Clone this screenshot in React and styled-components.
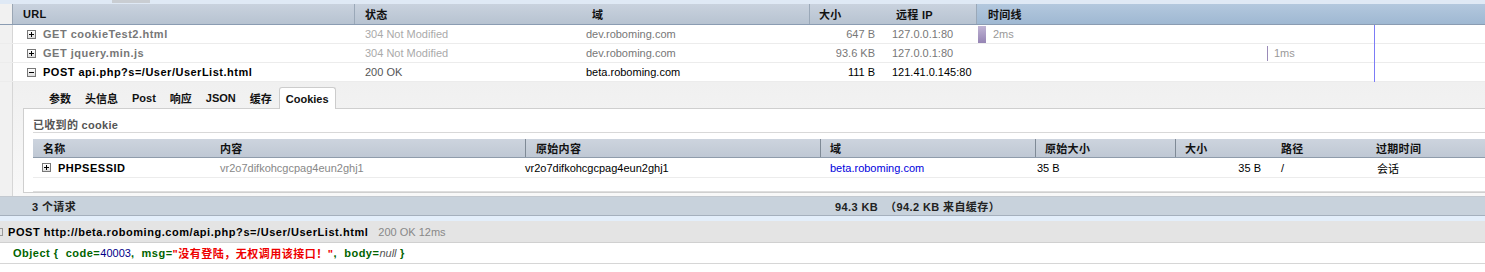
import React from 'react';
import styled, { createGlobalStyle } from 'styled-components';

const GlobalStyle = createGlobalStyle`
  html, body { margin: 0; padding: 0; background: #fff; }
  body {
    font-family: Tahoma, "Liberation Sans", "Noto Sans CJK SC", sans-serif;
    font-size: 11px;
    color: #000;
    overflow: hidden;
  }
`;

const Page = styled.div`
  width: 1485px;
  height: 272px;
  overflow: hidden;
  background: #fff;
`;

const TopStrip = styled.div`
  height: 4px;
  background: #dfe9f5;
  display: flex;
`;

const TopTab = styled.div`
  width: 38px;
  margin-left: 112px;
  height: 3px;
  background: #c9cdd2;
`;

const Header = styled.div`
  display: flex;
  height: 20px;
  border-bottom: 1px solid #8a9cb2;
  background: linear-gradient(#c9d2de, #b7c3d1);
`;

const Gutter = styled.div`
  width: 13px;
  flex: none;
  background: #f1f1f1;
  border-right: 1px solid ${p => (p.$dark ? '#9aa6b4' : '#d6d6d6')};
  box-sizing: border-box;
`;

const HeadCell = styled.div`
  width: ${p => p.$w}px;
  flex: ${p => (p.$grow ? '1' : 'none')};
  box-sizing: border-box;
  padding-left: ${p => p.$pad}px;
  display: flex;
  align-items: center;
  font-weight: bold;
  letter-spacing: 0.3px;
  color: #111;
  border-right: ${p => (p.$sep ? '1px solid #9aa8b8' : 'none')};
  background: ${p => (p.$blue ? 'linear-gradient(#b3c8de, #9fb8d2)' : 'transparent')};
`;

const Rows = styled.div`
  position: relative;
`;

const Row = styled.div`
  display: flex;
  height: 18px;
  border-bottom: 1px solid #ececec;
`;

const Cell = styled.div`
  width: ${p => p.$w}px;
  flex: ${p => (p.$grow ? '1' : 'none')};
  box-sizing: border-box;
  padding-left: ${p => p.$pad || 0}px;
  padding-right: ${p => p.$padR || 0}px;
  display: flex;
  align-items: center;
  justify-content: ${p => (p.$right ? 'flex-end' : 'flex-start')};
  color: ${p => p.$color || '#000'};
  font-weight: ${p => (p.$bold ? 'bold' : 'normal')};
  letter-spacing: ${p => (p.$bold ? '0.5px' : 'normal')};
  white-space: nowrap;
  position: relative;
`;

const Toggle = styled.span`
  width: 7px;
  height: 7px;
  border: 1px solid #777;
  background: linear-gradient(#fff, #ddd);
  margin-right: 7px;
  position: relative;
  flex: none;
  &::before {
    content: '';
    position: absolute;
    left: 1px;
    top: 3px;
    width: 5px;
    height: 1px;
    background: #000;
  }
  &::after {
    content: '';
    position: absolute;
    left: 3px;
    top: 1px;
    width: 1px;
    height: 5px;
    background: #000;
    display: ${p => (p.$open ? 'none' : 'block')};
  }
`;

const TimeBar = styled.span`
  width: 8px;
  height: 17px;
  margin-left: 1px;
  margin-right: 7px;
  background: linear-gradient(#c0b4d4, #9584b4);
`;

const TimeTick = styled.span`
  width: 1px;
  height: 15px;
  margin-left: ${p => p.$x}px;
  margin-right: 6px;
  background: #9a8bb8;
`;

const TimeLabel = styled.span`
  color: #999;
`;

const NowLine = styled.div`
  position: absolute;
  top: 0;
  bottom: 0;
  left: 1374px;
  width: 1px;
  background: #7c7cf6;
`;

const Detail = styled.div`
  display: flex;
  height: 114px;
  border-bottom: 1px solid #c3c9d0;
`;

const DetailBody = styled.div`
  flex: 1;
  padding: 4px 0 4px 10px;
  background: linear-gradient(#f0f0f0, #f8f8f8);
  display: flex;
  flex-direction: column;
`;

const Tabs = styled.div`
  display: flex;
  height: 23px;
  padding-left: 19px;
  align-items: flex-end;
`;

const Tab = styled.div`
  height: 22px;
  box-sizing: border-box;
  padding: 0 6px;
  display: flex;
  align-items: center;
  font-weight: bold;
  color: #111;
  margin-bottom: ${p => (p.$active ? '-1px' : '0')};
  background: ${p => (p.$active ? '#fff' : 'transparent')};
  border: 1px solid ${p => (p.$active ? '#cccccc' : 'transparent')};
  border-bottom: none;
  border-radius: 3px 3px 0 0;
  position: relative;
  z-index: 1;
`;

const TabPanel = styled.div`
  flex: 1;
  background: #fff;
  border: 1px solid #cfcfcf;
  border-right: none;
  padding: 6px 0 0 9px;
`;

const SectionTitle = styled.div`
  font-weight: bold;
  letter-spacing: 0.3px;
  color: #555;
  height: 17px;
  border-bottom: 1px solid #d8d8d8;
  display: flex;
  align-items: center;
`;

const CookieTable = styled.div`
  margin-top: 6px;
  border-bottom: 1px solid #dedede;
  padding-bottom: 13px;
`;

const CookieHead = styled.div`
  display: flex;
  height: 18px;
  background: linear-gradient(#cdd4de, #bfc8d4);
  border-bottom: 1px solid #8f9cab;
`;

const CookieHeadCell = styled(HeadCell)`
  border-right: none;
  border-left: ${p => (p.$lsep ? '1px solid #7f8a96' : 'none')};
`;

const CookieRow = styled.div`
  display: flex;
  height: 19px;
  border-bottom: 1px solid #ececec;
`;

const Summary = styled.div`
  display: flex;
  height: 18px;
  border-bottom: 1px solid #a5b0bd;
  background: #c8d2dc;
  font-weight: bold;
  letter-spacing: 0.4px;
  color: #222;
`;

const SummaryCell = styled.div`
  width: ${p => p.$w}px;
  flex: ${p => (p.$grow ? '1' : 'none')};
  padding-left: ${p => p.$pad}px;
  box-sizing: border-box;
  display: flex;
  align-items: center;
  white-space: pre;
`;

const BlueStrip = styled.div`
  height: 5px;
  background: #e3eefa;
`;

const LogHead = styled.div`
  height: 21px;
  background: #e4e4e4;
  border-bottom: 1px solid #d0d0d0;
  display: flex;
  align-items: center;
  padding-left: 8px;
  position: relative;
  &::before {
    content: '';
    position: absolute;
    left: -4px;
    top: 7px;
    width: 5px;
    height: 6px;
    border: 1px solid #999;
  }
`;

const LogUrl = styled.span`
  font-weight: bold;
  letter-spacing: 0.55px;
  color: #000;
  margin-right: 10px;
`;

const LogMeta = styled.span`
  color: #888;
`;

const LogLine = styled.div`
  height: 20px;
  border-bottom: 1px solid #d6d6d6;
  display: flex;
  align-items: center;
  padding-left: 13px;
  white-space: pre;
`;

const Obj = styled.span`
  color: #006400;
  font-weight: bold;
  letter-spacing: 0.5px;
`;

const Num = styled.span`
  color: #000088;
`;

const Str = styled.span`
  color: #ee0000;
  font-weight: bold;
  letter-spacing: 0.5px;
`;

const Null = styled.span`
  color: #555;
  font-style: italic;
`;

const requests = [
  { url: 'GET cookieTest2.html', status: '304 Not Modified', domain: 'dev.roboming.com', size: '647 B', ip: '127.0.0.1:80', tick: 'bar', time: '2ms' },
  { url: 'GET jquery.min.js', status: '304 Not Modified', domain: 'dev.roboming.com', size: '93.6 KB', ip: '127.0.0.1:80', tick: 290, time: '1ms' },
  { url: 'POST api.php?s=/User/UserList.html', status: '200 OK', domain: 'beta.roboming.com', size: '111 B', ip: '121.41.0.145:80', open: true },
];

const App = () => {
  return (
    <Page>
      <GlobalStyle />
      <TopStrip>
        <TopTab />
      </TopStrip>
      <Header>
        <Gutter $dark />
        <HeadCell $w={342} $pad={10} $sep>URL</HeadCell>
        <HeadCell $w={225} $pad={10}>状态</HeadCell>
        <HeadCell $w={230} $pad={12} $sep>域</HeadCell>
        <HeadCell $w={75} $pad={9}>大小</HeadCell>
        <HeadCell $w={92} $pad={11} $sep>远程 IP</HeadCell>
        <HeadCell $grow $pad={11} $blue>时间线</HeadCell>
      </Header>
      <Rows>
        {requests.map(r => (
          <Row key={r.url}>
            <Gutter />
            <Cell $w={342} $pad={14} $bold $color={r.open ? '#000' : '#777'}>
              <Toggle $open={r.open} />
              {r.url}
            </Cell>
            <Cell $w={225} $pad={10} $color={r.open ? '#555' : '#aaa'}>{r.status}</Cell>
            <Cell $w={230} $pad={6} $color={r.open ? '#000' : '#777'}>{r.domain}</Cell>
            <Cell $w={75} $padR={10} $right $color={r.open ? '#000' : '#777'}>{r.size}</Cell>
            <Cell $w={92} $pad={7} $color={r.open ? '#000' : '#777'}>{r.ip}</Cell>
            <Cell $grow>
              {r.tick === 'bar' && <TimeBar />}
              {typeof r.tick === 'number' && <TimeTick $x={r.tick} />}
              {r.time && <TimeLabel>{r.time}</TimeLabel>}
            </Cell>
          </Row>
        ))}
        <NowLine />
      </Rows>
      <Detail>
        <Gutter />
        <DetailBody>
          <Tabs>
            {['参数', '头信息', 'Post', '响应', 'JSON', '缓存'].map(t => (
              <Tab key={t}>{t}</Tab>
            ))}
            <Tab $active>Cookies</Tab>
          </Tabs>
          <TabPanel>
            <SectionTitle>已收到的 cookie</SectionTitle>
            <CookieTable>
              <CookieHead>
                <CookieHeadCell $w={187} $pad={10}>名称</CookieHeadCell>
                <CookieHeadCell $w={305} $pad={0}>内容</CookieHeadCell>
                <CookieHeadCell $w={295} $pad={10} $lsep>原始内容</CookieHeadCell>
                <CookieHeadCell $w={215} $pad={9} $lsep>域</CookieHeadCell>
                <CookieHeadCell $w={140} $pad={9} $lsep>原始大小</CookieHeadCell>
                <CookieHeadCell $w={106} $pad={9} $lsep>大小</CookieHeadCell>
                <CookieHeadCell $w={95} $pad={0}>路径</CookieHeadCell>
                <CookieHeadCell $grow $pad={0}>过期时间</CookieHeadCell>
              </CookieHead>
              <CookieRow>
                <Cell $w={187} $pad={9} $bold>
                  <Toggle />
                  PHPSESSID
                </Cell>
                <Cell $w={305} $color="#888">vr2o7difkohcgcpag4eun2ghj1</Cell>
                <Cell $w={295}>vr2o7difkohcgcpag4eun2ghj1</Cell>
                <Cell $w={215} $pad={10} $color="#0000dd">beta.roboming.com</Cell>
                <Cell $w={140} $pad={2}>35 B</Cell>
                <Cell $w={106} $right $padR={20}>35 B</Cell>
                <Cell $w={95}>/</Cell>
                <Cell $grow $pad={1}>会话</Cell>
              </CookieRow>
            </CookieTable>
          </TabPanel>
        </DetailBody>
      </Detail>
      <Summary>
        <SummaryCell $w={835} $pad={32}>3 个请求</SummaryCell>
        <SummaryCell $grow $pad={0}>94.3 KB  （94.2 KB 来自缓存）</SummaryCell>
      </Summary>
      <BlueStrip />
      <LogHead>
        <LogUrl>POST http://beta.roboming.com/api.php?s=/User/UserList.html</LogUrl>
        <LogMeta>200 OK 12ms</LogMeta>
      </LogHead>
      <LogLine>
        <Obj>Object {'{'}  code=</Obj>
        <Num>40003</Num>
        <Obj>,  msg=</Obj>
        <Str>"没有登陆，无权调用该接口！"</Str>
        <Obj>,  body=</Obj>
        <Null>null</Null>
        <Obj> {'}'}</Obj>
      </LogLine>
    </Page>
  );
};

export default App;
